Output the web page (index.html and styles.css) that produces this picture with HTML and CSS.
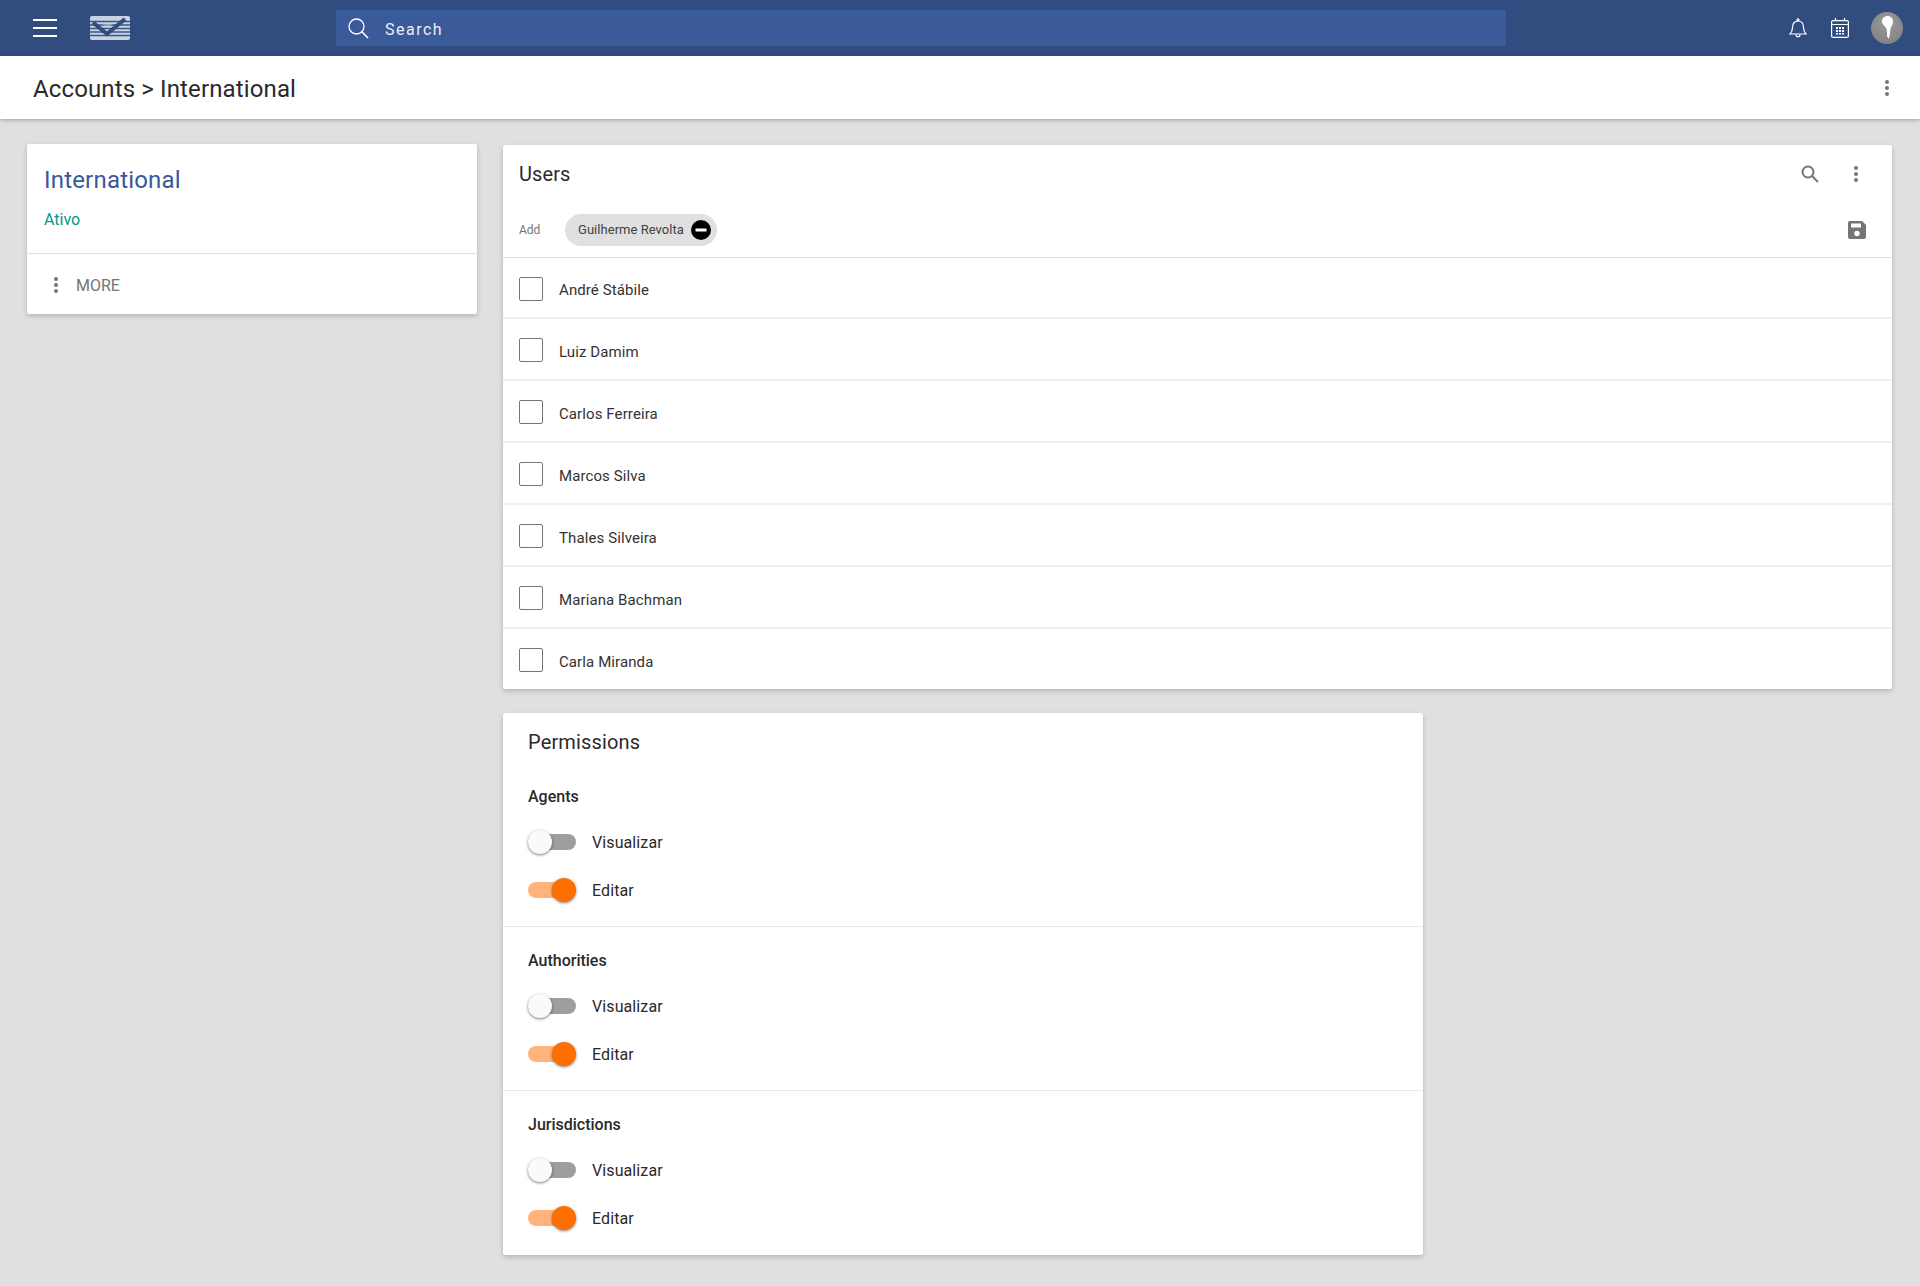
FILE: index.html
```html
<!DOCTYPE html>
<html lang="en">
<head>
<meta charset="utf-8">
<title>Accounts</title>
<link rel="stylesheet" href="styles.css">
</head>
<body>
<header class="topbar">
  <svg class="menu" width="24" height="20" viewBox="0 0 24 20"><path d="M0 2h24M0 10h24M0 18h24" stroke="#fff" stroke-width="2"/></svg>
  <svg class="logo" width="40" height="24" viewBox="0 0 40 24">
    <rect width="40" height="24" rx="2" fill="#c9d2e2"/>
    <path d="M0 5.500h40M0 9h40M0 12.500h40M0 16h40M0 19.500h40" stroke="#3a5586" stroke-width="1.300"/>
    <path d="M3 6.500 17 18 35 3" fill="none" stroke="#314d80" stroke-width="4"/>
    <path d="M10 7 19 12 23 7z" fill="#c9d2e2" opacity=".5"/>
  </svg>
  <div class="search">
    <svg width="22" height="22" viewBox="0 0 22 22" fill="none" stroke="#fff" stroke-width="1.300"><circle cx="9.500" cy="9.500" r="7.500"/><path d="M15 15l6 6" stroke-width="1.600"/></svg>
    <span class="search-text">Search</span>
  </div>
  <div class="top-icons">
    <svg width="18" height="20" viewBox="0 0 18 20" fill="none" stroke="#fff" stroke-width="1.200"><path d="M1 16c2-2 2.500-3.500 2.500-6.500C3.500 5.500 5.500 3 9 3s5.500 2.500 5.500 6.500c0 3 .5 4.500 2.500 6.500z"/><circle cx="9" cy="1.800" r="1"/><path d="M7 16.500c0 3 4 3 4 0"/></svg>
    <svg width="18" height="20" viewBox="0 0 18 20"><rect x=".6" y="2.600" width="16.800" height="16.800" rx="1.500" fill="none" stroke="#fff" stroke-width="1.200"/><path d="M1 6.500h16M4.500 0v3M13.500 0v3" stroke="#fff" stroke-width="1.200"/><path d="M5 9h2v2H5zM8 9h2v2H8zM11 9h2v2h-2zM5 12h2v2H5zM8 12h2v2H8zM11 12h2v2h-2zM5 15h2v1.500H5zM8 15h2v1.500H8zM11 15h2v1.500h-2z" fill="#fff"/></svg>
    <div class="avatar"><svg width="11" height="24" viewBox="0 0 12 26"><path d="M6 0c3.500 0 6 2.500 6 6 0 3-1.500 5-2.500 7-.5 2-.5 6-2 12l-2-3c0-4 0-7-1-9C3 11 0 9 0 6c0-3.500 2.500-6 6-6z" fill="#fff"/></svg></div>
  </div>
</header>

<section class="subheader">
  <h1>Accounts &gt; International</h1>
  <svg class="dots" width="4" height="16" viewBox="0 0 4 16"><circle cx="2" cy="2" r="2"/><circle cx="2" cy="8" r="2"/><circle cx="2" cy="14" r="2"/></svg>
</section>

<main class="content">
  <aside class="card account">
    <div class="account-head">
      <h2>International</h2>
      <p class="status">Ativo</p>
    </div>
    <div class="account-foot">
      <svg class="dots" width="4" height="16" viewBox="0 0 4 16"><circle cx="2" cy="2" r="2"/><circle cx="2" cy="8" r="2"/><circle cx="2" cy="14" r="2"/></svg>
      <span>MORE</span>
    </div>
  </aside>

  <div class="right">
    <section class="card users">
      <div class="users-title">
        <h3>Users</h3>
        <svg width="18" height="18" viewBox="0 0 18 18" fill="none" stroke="#757575" stroke-width="2"><circle cx="7" cy="7" r="5.500"/><path d="M11 11l6 6"/></svg>
        <svg class="dots" width="4" height="16" viewBox="0 0 4 16"><circle cx="2" cy="2" r="2"/><circle cx="2" cy="8" r="2"/><circle cx="2" cy="14" r="2"/></svg>
      </div>
      <div class="users-add">
        <span class="add-label">Add</span>
        <span class="chip">Guilherme Revolta<svg width="20" height="20" viewBox="0 0 20 20"><circle cx="10" cy="10" r="10" fill="#000"/><rect x="4.500" y="8.500" width="11" height="3" fill="#fff"/></svg></span>
        <svg class="save" width="18" height="18" viewBox="0 0 18 18"><path d="M2 0h12l4 4v12a2 2 0 0 1-2 2H2a2 2 0 0 1-2-2V2a2 2 0 0 1 2-2z" fill="#757575"/><rect x="3" y="2.500" width="10" height="4" fill="#fff"/><circle cx="9" cy="12.500" r="2.700" fill="#fff"/></svg>
      </div>
      <ul class="user-list">
        <li><span class="check"></span>André Stábile</li>
        <li><span class="check"></span>Luiz Damim</li>
        <li><span class="check"></span>Carlos Ferreira</li>
        <li><span class="check"></span>Marcos Silva</li>
        <li><span class="check"></span>Thales Silveira</li>
        <li><span class="check"></span>Mariana Bachman</li>
        <li><span class="check"></span>Carla Miranda</li>
      </ul>
    </section>

    <section class="card perms">
      <h3 class="perms-title">Permissions</h3>
      <div class="group">
        <h4>Agents</h4>
        <div class="toggle-row"><span class="switch"><span class="knob"></span></span>Visualizar</div>
        <div class="toggle-row"><span class="switch on"><span class="knob"></span></span>Editar</div>
      </div>
      <div class="group">
        <h4>Authorities</h4>
        <div class="toggle-row"><span class="switch"><span class="knob"></span></span>Visualizar</div>
        <div class="toggle-row"><span class="switch on"><span class="knob"></span></span>Editar</div>
      </div>
      <div class="group">
        <h4>Jurisdictions</h4>
        <div class="toggle-row"><span class="switch"><span class="knob"></span></span>Visualizar</div>
        <div class="toggle-row"><span class="switch on"><span class="knob"></span></span>Editar</div>
      </div>
    </section>
  </div>
</main>
</body>
</html>
```
FILE: styles.css
```css
* { box-sizing: border-box; }
html, body { margin: 0; padding: 0; }
body {
  min-height: 1286px;
  background: #e0e0e0;
  font-family: Roboto, "Liberation Sans", sans-serif;
  color: #212121;
}
h1, h2, h3, h4, p, ul { margin: 0; padding: 0; font-weight: 400; }

.topbar {
  height: 56px;
  background: #314d80;
  display: flex;
  align-items: center;
  padding-left: 33px;
}
.menu { margin-right: 33px; }
.logo { margin-right: 206px; }
.search {
  width: 1170px;
  height: 36px;
  background: #3b5a99;
  display: flex;
  align-items: center;
  padding-left: 11px;
  gap: 16px;
  color: #fff;
}
.search-text { font-size: 16px; letter-spacing: 1.500px; opacity: .9; margin-top: 2px; }
.top-icons {
  margin-left: auto;
  padding-right: 16px;
  display: flex;
  align-items: center;
  gap: 24px;
}
.avatar {
  width: 32px;
  height: 32px;
  border-radius: 50%;
  background: radial-gradient(circle at 50% 35%, #9a9a9a, #7d7d7d);
  display: flex;
  align-items: center;
  justify-content: center;
  margin-left: -2px;
  margin-right: 1px;
}

.subheader {
  height: 63px;
  background: #fff;
  box-shadow: 0 1px 4px rgba(0,0,0,.3);
  display: flex;
  align-items: center;
  justify-content: space-between;
  padding: 0 31px 0 33px;
  position: relative;
}
.subheader h1 { font-size: 24px; line-height: 32px; color: #2a2a2a; letter-spacing: .13px; margin-top: 2px; }
.dots { fill: #757575; }

.content {
  display: flex;
  align-items: flex-start;
  gap: 26px;
  padding: 25px 0 0 27px;
}
.card {
  background: #fff;
  border-radius: 2px;
  box-shadow: 0 2px 5px rgba(0,0,0,.2);
}
.account { width: 450px; height: 170px; }
.account-head { height: 110px; padding: 20px 17px 0; border-bottom: 1px solid #e0e0e0; }
.account-head h2 { font-size: 24px; line-height: 32px; color: #39589a; letter-spacing: .19px; }
.status { font-size: 16px; line-height: 20px; color: #009a85; margin-top: 14px; }
.account-foot {
  height: 60px;
  display: flex;
  align-items: center;
  padding: 2px 0 0 27px;
  gap: 18px;
  font-size: 16px;
  color: #757575;
}

.right { width: 1389px; padding-top: 1px; display: flex; flex-direction: column; gap: 24px; }
.users { height: 544px; }
.users-title {
  height: 57px;
  display: flex;
  align-items: center;
  padding: 1px 34px 0 16px;
  gap: 35px;
}
.users-title h3 { font-size: 20px; line-height: 28px; margin-right: auto; color: #2a2a2a; letter-spacing: .1px; }
.users-add {
  height: 56px;
  display: flex;
  align-items: center;
  padding: 0 26px 0 16px;
  border-bottom: 1px solid #e0e0e0;
}
.add-label { font-size: 12px; color: #757575; width: 46px; }
.chip {
  height: 32px;
  border-radius: 16px;
  background: #e0e0e0;
  display: flex;
  align-items: center;
  gap: 7px;
  padding: 0 6px 0 13px;
  font-size: 13px;
  letter-spacing: .04px;
  color: #424242;
}
.save { margin-left: auto; }
.user-list { list-style: none; }
.user-list li {
  height: 62px;
  display: flex;
  align-items: center;
  padding: 5px 0 0 16px;
  font-size: 15px;
  letter-spacing: .1px;
  color: #333;
  border-bottom: 2px solid #f0f0f0;
}
.user-list li:first-child { height: 61px; }
.user-list li:last-child { border-bottom: 0; height: 60px; }
.check {
  width: 24px;
  height: 24px;
  border: 1px solid #757575;
  border-radius: 2px;
  margin-right: 16px;
  margin-top: -3px;
}

.perms { width: 920px; height: 542px; }
.perms-title { font-size: 20px; line-height: 28px; padding: 15px 25px 0; height: 56px; color: #2a2a2a; letter-spacing: .15px; }
.group { padding: 22px 25px 0; height: 164px; border-bottom: 1px solid #e8e8e8; }
.perms-title + .group { height: 158px; padding-top: 16px; }
.group:last-child { border-bottom: 0; }
.group h4 { font-size: 16px; line-height: 24px; font-weight: 500; color: #2a2a2a; margin-bottom: 9px; }
.toggle-row {
  height: 48px;
  display: flex;
  align-items: center;
  font-size: 16px;
  letter-spacing: .1px;
  color: #2a2a2a;
}
.switch {
  width: 48px;
  height: 16px;
  border-radius: 8px;
  background: #9e9e9e;
  position: relative;
  margin-right: 16px;
}
.knob {
  position: absolute;
  left: 0;
  top: -4px;
  width: 24px;
  height: 24px;
  border-radius: 50%;
  background: #fafafa;
  box-shadow: 0 1px 3px rgba(0,0,0,.5);
}
.switch.on { background: #ffb27c; }
.switch.on .knob { left: 24px; background: #ff6f00; }
```
